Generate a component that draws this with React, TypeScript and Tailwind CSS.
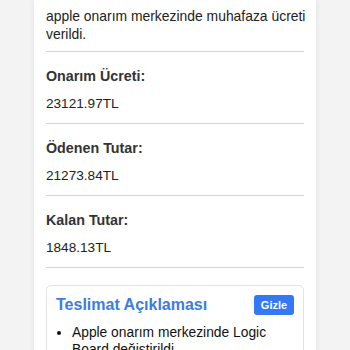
import React from "react";

const sections = [
  { label: "Onarım Ücreti:", value: "23121.97TL" },
  { label: "Ödenen Tutar:", value: "21273.84TL" },
  { label: "Kalan Tutar:", value: "1848.13TL" },
];

export default function App() {
  return (
    <div
      className="min-h-[350px] h-[350px] overflow-hidden bg-[#f3f3f3] px-[34px]"
      style={{ fontFamily: '"Liberation Sans", Arial, sans-serif' }}
    >
      <div className="bg-white shadow-[0_0_6px_rgba(0,0,0,0.08)] pl-[12px] pr-[12px] pb-6 text-[#222]">
        <div className="pt-[7px] pb-[8px] text-[13.9px] leading-[18px] -mr-[4px]">
          apple onarım merkezinde muhafaza ücreti verildi.
        </div>
        {sections.map((s) => (
          <div key={s.label} className="border-t border-[#d6d6d6] pt-[15px] pb-[10px]">
            <div className="text-[14.3px] leading-[19px] font-bold text-[#333]">{s.label}</div>
            <div className="mt-[8px] text-[13.6px] leading-[19px]">{s.value}</div>
          </div>
        ))}
        <div className="border-t border-[#d6d6d6] pt-[17px]">
          <div className="rounded-[5px] border border-[#e3e3e3] pl-[9px] pr-[9px] pt-[8px] pb-4">
            <div className="flex items-start justify-between">
              <div className="text-[16px] leading-[22px] font-bold text-[#3b7de0]">
                Teslimat Açıklaması
              </div>
              <button className="mt-[1px] h-[20px] w-[40px] rounded-[3px] bg-[#3478f6] text-[11px] font-bold text-white">
                Gizle
              </button>
            </div>
            <ul className="mt-[8px] list-disc pl-[16px] text-[13.8px] leading-[17px] text-[#111]">
              <li>Apple onarım merkezinde Logic Board değiştirildi</li>
            </ul>
          </div>
        </div>
      </div>
    </div>
  );
}
